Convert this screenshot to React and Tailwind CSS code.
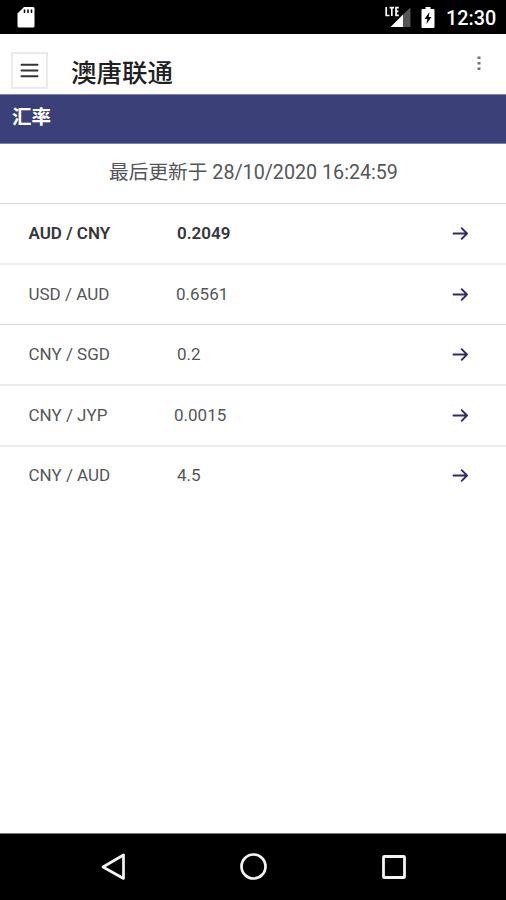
const rates = [
  { pair: 'AUD / CNY', value: '0.2049', offset: 'pl-[177px]', strong: true, height: 'h-[61px]', line: 'border-b-2 border-[#ececee]' },
  { pair: 'USD / AUD', value: '0.6561', offset: 'pl-[176px]', height: 'h-[60px]', line: 'border-b border-[#dedee0]' },
  { pair: 'CNY / SGD', value: '0.2', offset: 'pl-[177px]', height: 'h-[61px]', line: 'border-b-2 border-[#ececee]' },
  { pair: 'CNY / JYP', value: '0.0015', offset: 'pl-[174px]', height: 'h-[61px]', line: 'border-b-2 border-[#ececee]' },
  { pair: 'CNY / AUD', value: '4.5', offset: 'pl-[177px]', height: 'h-[57px]', line: '' },
];

function StatusBar() {
  return (
    <div className="flex h-[34px] shrink-0 items-start bg-black text-white">
      <svg className="ml-[17px] mt-[7px]" width="18" height="21" viewBox="0 0 18 21">
        <path d="M7 0H16Q17.5 0 17.5 1.5V19Q17.5 20.5 16 20.5H2Q.5 20.5 .5 19V6.500Z" fill="#fff" />
        <path d="M7.500 2.500V6M11 2.500V6M14.500 2.500V6" stroke="#000" strokeWidth="1.500" />
      </svg>
      <div className="ml-auto flex items-start">
        <svg className="mt-[6px]" width="27" height="22" viewBox="0 0 27 22">
          <path d="M5.500 21L18 8.500V21Z" fill="#fff" />
          <path d="M18 8.500L25.500 1.500V21H18Z" fill="#555" />
          <path d="M1.200 1V9.500H4.500M4.500 1.700H9M6.800 1.700V10M13.800 1.700H11V9.300H13.800M11 5.400H13.400" fill="none" stroke="#fff" strokeWidth="1.700" />
        </svg>
        <svg className="ml-[9px] mt-[7px]" width="14" height="21" viewBox="0 0 14 21">
          <path d="M4.500 0H9.500V2H12.500Q13.500 2 13.500 3V20Q13.500 21 12.500 21H1.500Q.5 21 .5 20V3Q.5 2 1.500 2H4.500Z" fill="#fff" />
          <path d="M8.500 5L3.500 12H6.300L5.500 17L10.500 10H7.700Z" fill="#000" />
        </svg>
        <span className="ml-[11px] mr-[10px] mt-[7px] w-[50px] whitespace-nowrap text-[19.800px] font-medium leading-6">12:30</span>
      </div>
    </div>
  );
}

function Header() {
  return (
    <header className="flex h-[60px] shrink-0 items-start bg-white">
      <button className="ml-[11px] mt-[18px] flex h-[37px] w-[37px] items-center justify-center border-2 border-[#ebebeb]">
        <svg width="19" height="15" viewBox="0 0 19 15">
          <path d="M1.500 1.800H17.500M1.500 7.500H17.500M1.500 13.200H17.500" stroke="#333" strokeWidth="2" strokeLinecap="round" />
        </svg>
      </button>
      <h1 className="ml-[23px] mt-[21px] text-[25.5px] font-medium leading-9 text-[#202020]">澳唐联通</h1>
      <svg className="ml-auto mr-[25px] mt-[22px]" width="4" height="15" viewBox="0 0 4 15">
        <path d="M.5 .5H3.500V3H.5ZM.5 6H3.500V8.500H.5ZM.5 11.500H3.500V14H.5Z" fill="#737373" />
      </svg>
    </header>
  );
}

function Arrow() {
  return (
    <svg width="17" height="14" viewBox="0 0 17 14">
      <path d="M1.500 6.500H15M9.700 1.200L15 6.500L9.700 11.800" fill="none" stroke="#312b69" strokeWidth="1.900" strokeLinecap="round" strokeLinejoin="round" />
    </svg>
  );
}

function RateRow({ pair, value, offset, strong, height, line }) {
  return (
    <div className={`grid shrink-0 items-center text-[17px] ${height} ${line} ${strong ? 'font-semibold text-[#35353a]' : 'text-[#55555a]'}`}>
      <span className="col-start-1 row-start-1 pl-[28.500px] pt-px">{pair}</span>
      <span className={`col-start-1 row-start-1 pt-px ${offset}`}>{value}</span>
      <span className="col-start-1 row-start-1 justify-self-end pr-[37px]"><Arrow /></span>
    </div>
  );
}

function NavBar() {
  return (
    <nav className="mt-auto flex h-[67px] shrink-0 items-start border-t border-[#777] bg-black">
      <svg className="ml-[101px] mt-[19px]" width="25" height="28" viewBox="0 0 25 28">
        <path d="M22.500 2V25.500L2 14Z" fill="none" stroke="#f4f4f4" strokeWidth="2.700" strokeLinejoin="round" />
      </svg>
      <svg className="ml-[113px] mt-[18px]" width="29" height="29" viewBox="0 0 29 29">
        <circle cx="14.500" cy="14.500" r="12" fill="none" stroke="#f4f4f4" strokeWidth="2.700" />
      </svg>
      <svg className="ml-[113px] mt-[20px]" width="26" height="26" viewBox="0 0 26 26">
        <rect x="2.500" y="2.500" width="21" height="21" rx=".8" fill="none" stroke="#f4f4f4" strokeWidth="2.800" />
      </svg>
    </nav>
  );
}

export default function App() {
  return (
    <main className="flex h-[900px] w-[506px] flex-col overflow-hidden bg-white font-['Roboto','Noto_Sans_CJK_SC',sans-serif]">
      <StatusBar />
      <Header />
      <div className="h-[50px] shrink-0 border-y border-[#8182aa] bg-[#3c4079] pl-[12px] pt-[9px] text-[19.500px] font-bold leading-7 text-white">汇率</div>
      <div className="flex h-[60px] shrink-0 items-center justify-center border-b border-[#dedee0] pb-[2px] pl-px text-[19.700px] text-[#55555a]">最后更新于 28/10/2020 16:24:59</div>
      {rates.map((rate) => <RateRow key={rate.pair} {...rate} />)}
      <NavBar />
    </main>
  );
}
